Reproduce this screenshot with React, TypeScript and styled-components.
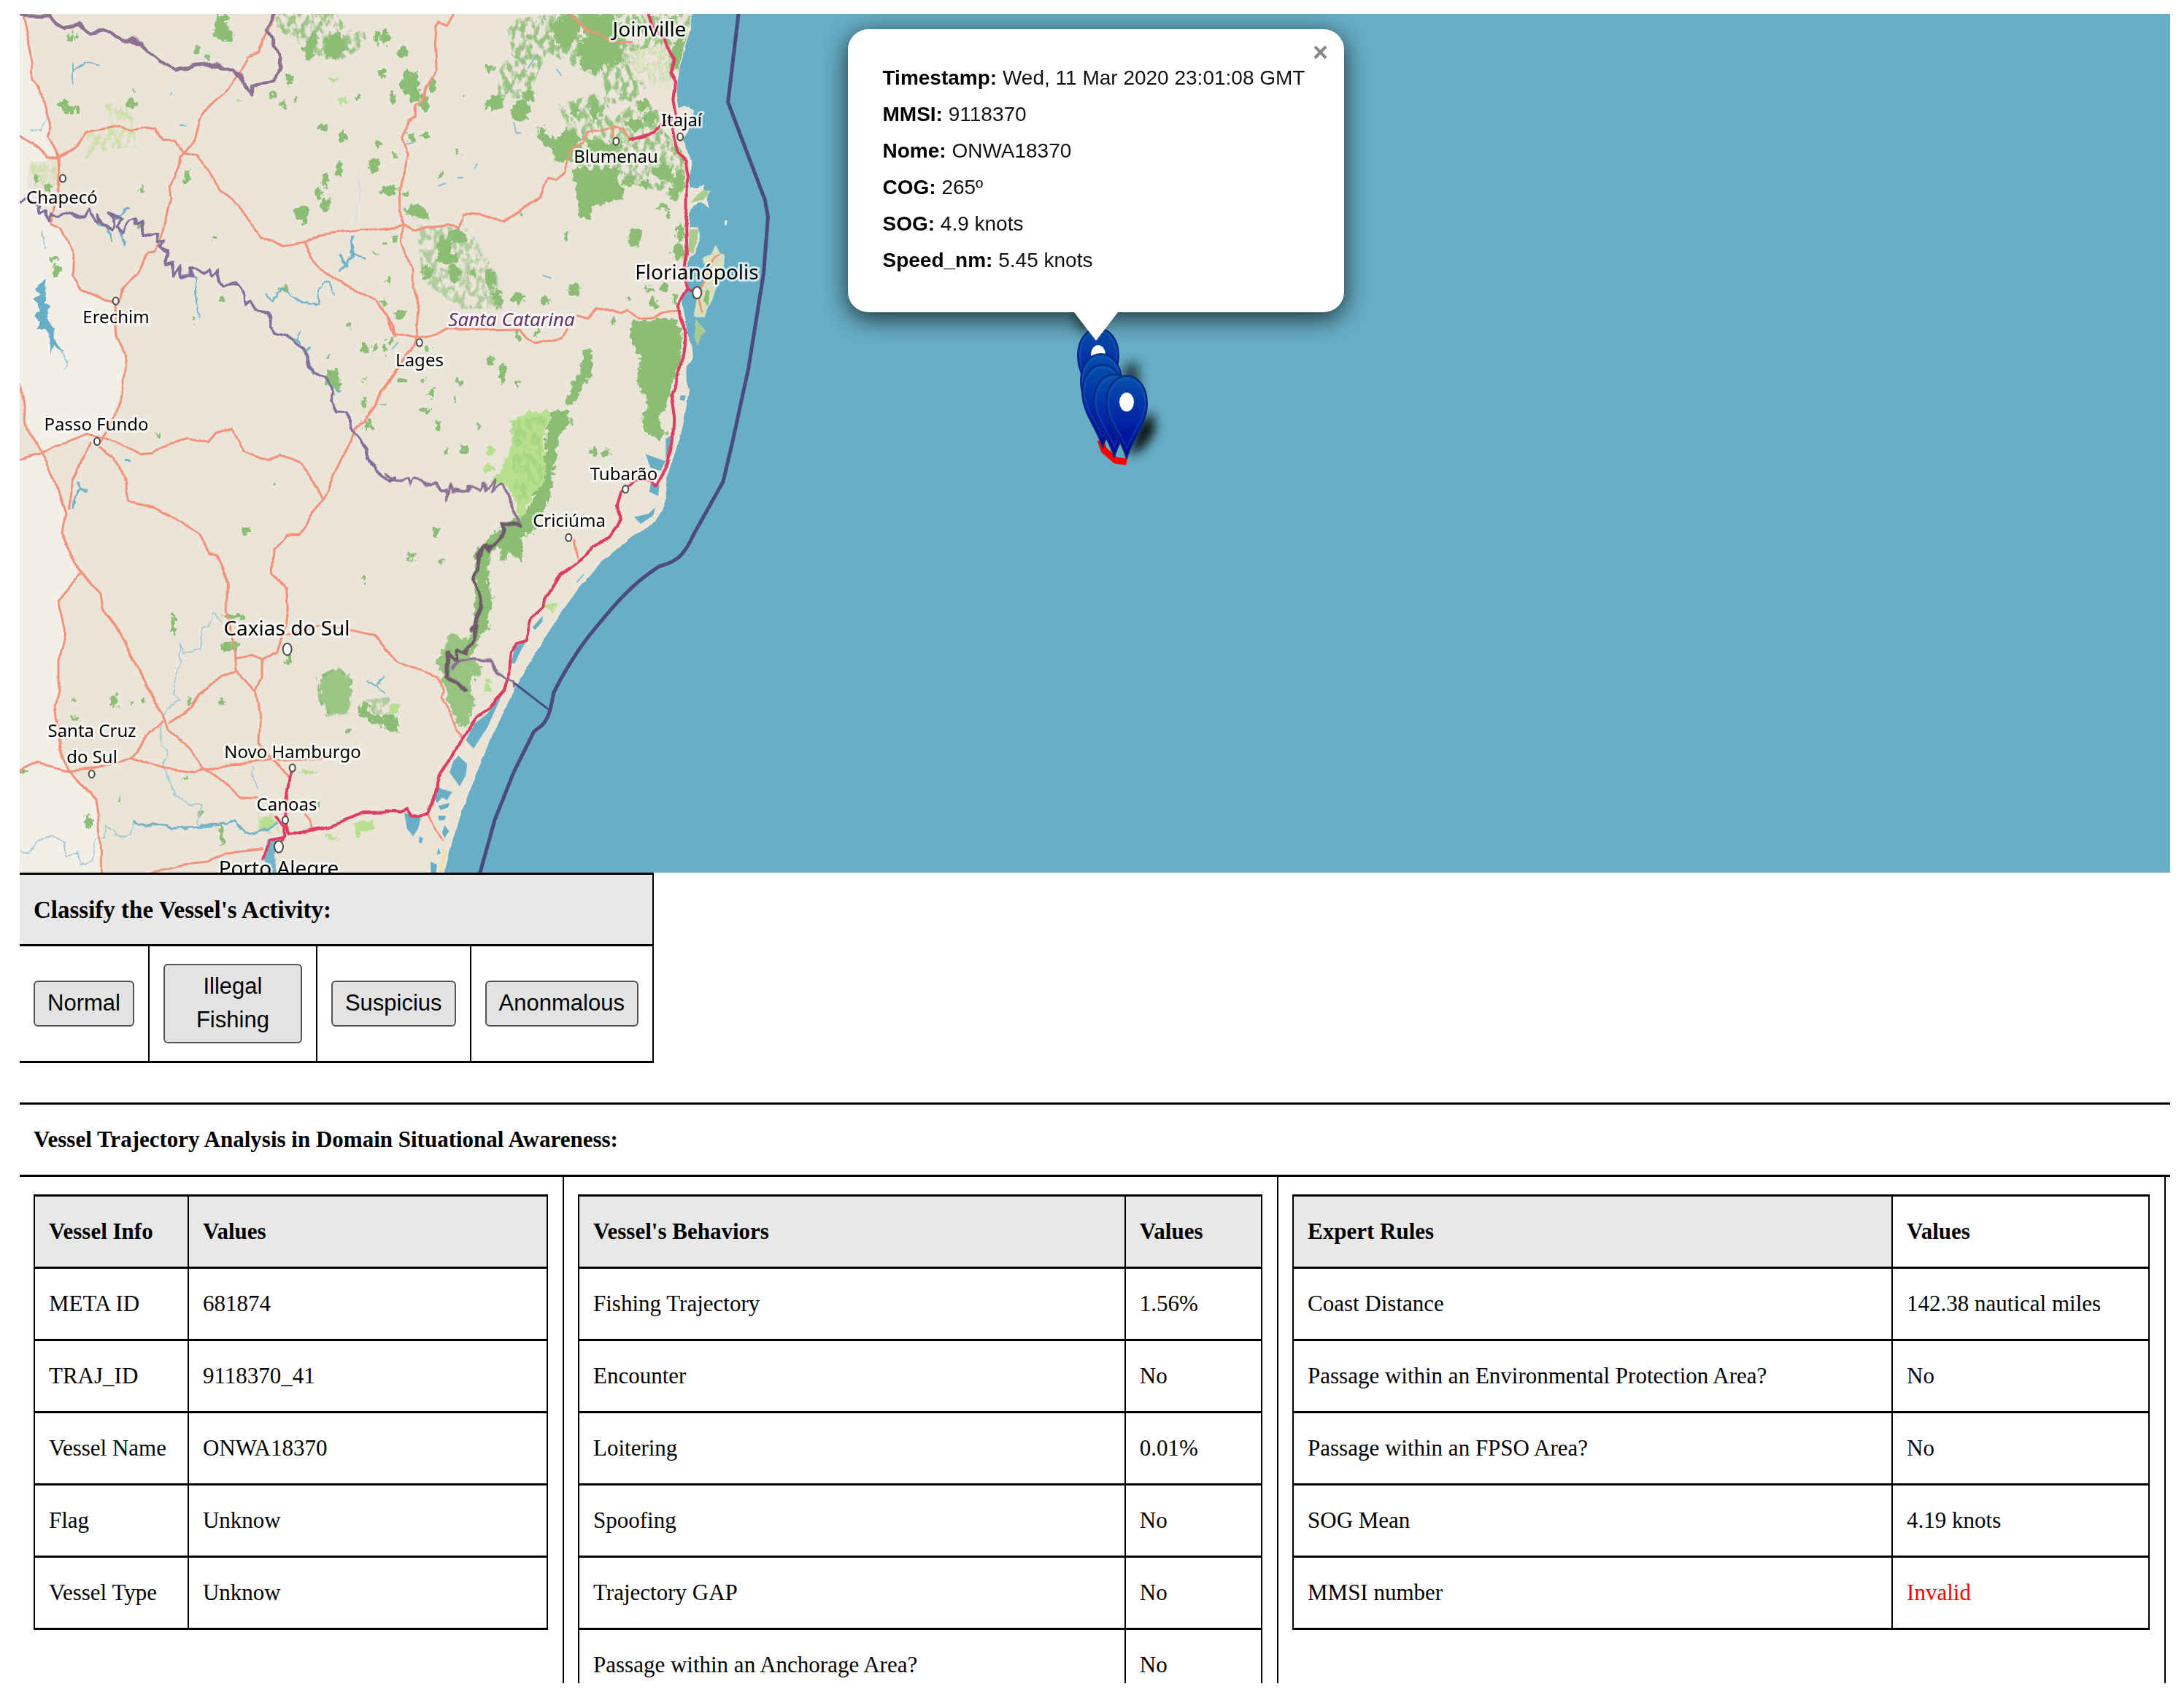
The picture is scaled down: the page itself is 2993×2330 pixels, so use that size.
import React from "react";
import styled, { createGlobalStyle } from "styled-components";

const GlobalStyle = createGlobalStyle`
  *, *::before, *::after { box-sizing: border-box; }
  body {
    margin: 0;
    background: #fff;
    color: #000;
    font-family: "Liberation Serif", "Times New Roman", serif;
  }
`;

const Page = styled.main`
  height: 100vh;
  padding: 19px 19px 23px 27px;
`;

const Viewport = styled.div`
  height: 100%;
  overflow: hidden;
`;

/* ---------- map ---------- */

const MapFrame = styled.section`
  position: relative;
  overflow: hidden;
  background: #67aec6;
`;

const MapCanvas = styled.svg`
  display: block;
  width: 100%;
  height: auto;
`;

const Popup = styled.article`
  position: absolute;
  left: 50%;
  top: 21px;
  width: 680px;
  height: 388px;
  margin-left: -339px;
  padding: 42px 24px 0 48px;
  border-radius: 28px;
  background: #fff;
  box-shadow: 0 8px 34px rgba(0, 0, 0, 0.75);
  font-family: "Liberation Sans", Arial, sans-serif;
  font-size: 28px;
  line-height: 50px;

  &::after {
    content: "";
    position: absolute;
    left: 50%;
    top: 100%;
    margin-left: -30px;
    border: 30px solid transparent;
    border-top: 39px solid #fff;
    border-bottom: 0;
  }
`;

const PopupLine = styled.p`
  margin: 0;
  color: #111;
  white-space: nowrap;

  b {
    color: #000;
  }
`;

const CloseButton = styled.button`
  position: absolute;
  right: 12px;
  top: 12px;
  width: 40px;
  height: 40px;
  padding: 0;
  border: 0;
  background: none;
  color: #8a8a8a;
  font: bold 36px/40px "Liberation Sans", Arial, sans-serif;
`;

const MapLabel = styled.text<{ $size: number; $region?: boolean }>`
  font-family: "Noto Sans", "Open Sans", sans-serif;
  font-size: ${(p) => p.$size}px;
  font-style: ${(p) => (p.$region ? "italic" : "normal")};
  fill: ${(p) => (p.$region ? "#5f3366" : "#000")};
  text-anchor: middle;
  paint-order: stroke;
  stroke: rgba(255, 255, 255, 0.7);
  stroke-width: 6px;
  stroke-linejoin: round;
`;

const Line = styled.path<{ $color: string; $width: number }>`
  fill: none;
  stroke: ${(p) => p.$color};
  stroke-width: ${(p) => p.$width}px;
  stroke-linejoin: round;
  stroke-linecap: round;
  vector-effect: non-scaling-stroke;
`;

/* The land is digitised on a west and an east sheet, each with its own scale. */
const west = (x: number, y: number) => [x / 3 - 7, y / 2.613 - 9] as const;
const east = (x: number, y: number) => [x / 2.904 + 503, y / 2.613 - 9] as const;
const WEST = "translate(-7 -9) scale(0.3333 0.3827)";
const EAST = "translate(503 -9) scale(0.3444 0.3827)";

const LAND = "#eae4d9";
const PLAIN = "#f2efe9";
const WOOD = "#8bbd74";
const SCRUB = "#b6df8e";
const WATER = "#67aec6";
const ROAD = "#f4917a";
const MOTORWAY = "#e03a62";
const STATE = "#8c7192";
const SEA = "#4a4a80";

type Place = { name: string; x: number; y: number; size?: number; region?: boolean };
const places: Place[] = [
  { name: "Joinville", x: 863, y: 31, size: 28 },
  { name: "Itajaí", x: 907, y: 154 },
  { name: "Blumenau", x: 817, y: 204 },
  { name: "Florianópolis", x: 928, y: 364, size: 28 },
  { name: "Santa Catarina", x: 674, y: 428, size: 26, region: true },
  { name: "Lages", x: 548, y: 483 },
  { name: "Chapecó", x: 58, y: 260 },
  { name: "Erechim", x: 132, y: 424 },
  { name: "Passo Fundo", x: 105, y: 571 },
  { name: "Tubarão", x: 828, y: 639 },
  { name: "Criciúma", x: 753, y: 703 },
  { name: "Caxias do Sul", x: 366, y: 852, size: 28 },
  { name: "Santa Cruz", x: 99, y: 991 },
  { name: "do Sul", x: 99, y: 1027 },
  { name: "Novo Hamburgo", x: 374, y: 1020 },
  { name: "Canoas", x: 366, y: 1092 },
  { name: "Porto Alegre", x: 355, y: 1181, size: 28 },
];

const towns = [
  west(198, 613), west(416, 1052), west(339, 1555), west(317, 2746),
  west(1142, 2724), west(1113, 2911), east(130, 1201), east(913, 480),
  east(1168, 464), east(950, 1726), east(724, 1899),
];
const cities = [east(1235, 1022), west(1121, 2299), west(1086, 3006)];

/* Small woods: x, y, rx, ry */
const westWoods = [
  [850, 40, 26, 16], [850, 80, 30, 40], [880, 100, 20, 20], [752, 155, 14, 16], [795, 178, 10, 9],
  [222, 110, 18, 10], [252, 98, 8, 10], [200, 345, 22, 14], [225, 365, 24, 14], [260, 368, 12, 14],
  [480, 345, 22, 18], [490, 298, 5, 8], [1208, 160, 24, 26], [1225, 120, 18, 30], [1128, 258, 16, 18],
  [1060, 318, 10, 12], [1105, 345, 10, 16], [1155, 332, 8, 10], [1412, 320, 10, 10], [1552, 325, 9, 20],
  [1510, 236, 12, 14], [1490, 105, 16, 24], [1527, 110, 20, 22], [1268, 428, 20, 12], [1350, 462, 16, 16],
  [1498, 488, 16, 14], [1478, 568, 22, 26], [1335, 578, 14, 28], [1278, 620, 14, 28], [1250, 665, 16, 22],
  [1275, 705, 18, 26], [1180, 735, 36, 24], [1190, 762, 16, 14], [1535, 658, 28, 18], [707, 610, 12, 26],
  [92, 614, 14, 18], [140, 645, 16, 12], [160, 905, 14, 8], [175, 940, 18, 22], [527, 655, 9, 8],
  [517, 775, 10, 12], [820, 826, 8, 8], [1520, 850, 7, 8], [1482, 882, 8, 6], [1540, 978, 8, 14],
  [850, 1040, 10, 10], [738, 1115, 8, 14], [1110, 1005, 20, 8], [1518, 1058, 14, 8], [1378, 1136, 12, 12],
  [1440, 1222, 12, 18], [1482, 1218, 12, 16], [1522, 1228, 8, 14], [1545, 1190, 9, 12], [1298, 1250, 8, 7],
  [1305, 1325, 30, 28], [1320, 1360, 22, 18], [1438, 1410, 14, 18], [1438, 1336, 7, 7], [1452, 1498, 20, 16],
  [1515, 1425, 12, 6], [592, 1532, 7, 7], [1068, 1704, 6, 10], [948, 1874, 16, 16], [652, 2208, 10, 40],
  [410, 2485, 14, 28], [245, 2480, 10, 7], [245, 2546, 10, 10], [480, 2492, 12, 9], [528, 2484, 6, 12],
  [716, 2482, 10, 10], [852, 2486, 14, 8], [870, 2292, 22, 14], [905, 2292, 14, 20], [900, 2184, 44, 10],
  [1436, 2052, 8, 12], [1368, 2588, 8, 12], [706, 2762, 8, 10], [434, 2836, 7, 6], [305, 2920, 14, 30],
  [762, 2890, 8, 14], [852, 2970, 10, 40], [1250, 2855, 7, 10], [1130, 2335, 16, 16], [40, 2738, 12, 7],
];
const eastWoods = [
  [62, 160, 18, 18], [92, 270, 38, 44], [150, 345, 16, 34], [112, 320, 24, 20], [24, 328, 10, 14],
  [182, 282, 12, 22], [308, 320, 7, 7], [410, 220, 14, 18], [530, 370, 36, 40], [565, 318, 26, 20],
  [430, 345, 38, 28], [98, 465, 12, 14], [154, 460, 18, 14], [34, 528, 9, 12], [278, 520, 8, 6],
  [222, 592, 16, 10], [20, 655, 22, 20], [74, 668, 14, 12], [118, 730, 44, 24], [150, 748, 16, 14],
  [280, 820, 34, 26], [228, 850, 26, 34], [240, 900, 44, 20], [160, 950, 24, 24], [270, 955, 24, 30],
  [32, 824, 12, 12], [412, 972, 24, 30], [345, 950, 8, 10], [440, 1040, 20, 36], [520, 1040, 28, 18],
  [628, 1052, 16, 16], [746, 1010, 28, 24], [716, 816, 8, 14], [988, 825, 26, 40], [966, 1044, 6, 14],
  [745, 368, 16, 24], [826, 362, 18, 42], [1025, 350, 22, 18], [1045, 395, 26, 22], [985, 420, 40, 22],
  [1100, 590, 44, 28], [1028, 630, 16, 14], [960, 620, 26, 20], [1165, 620, 20, 40], [1146, 670, 18, 28],
  [1100, 715, 26, 12], [1122, 738, 8, 14], [1168, 810, 14, 28], [1162, 876, 22, 30], [1046, 1008, 20, 8],
  [1104, 1000, 12, 24], [1062, 1066, 16, 20], [1146, 1050, 10, 16], [904, 1126, 8, 14], [522, 1180, 10, 22],
  [596, 1166, 10, 10], [162, 1222, 12, 14], [412, 1265, 14, 20], [462, 1308, 14, 38], [522, 1350, 8, 20],
  [292, 1345, 12, 12], [182, 1382, 16, 16], [60, 1338, 20, 14], [146, 1332, 7, 12], [274, 1400, 7, 10],
  [150, 1442, 22, 8], [205, 1500, 14, 18], [362, 1496, 6, 8], [50, 1100, 22, 22], [540, 742, 7, 10],
  [310, 1587, 14, 14], [238, 1592, 8, 12], [818, 1590, 18, 12], [870, 1600, 18, 18], [194, 1880, 12, 18],
  [96, 1966, 18, 14], [222, 1984, 8, 12], [14, 2560, 24, 30],
];

const Woods = ({ items }: { items: number[][] }) => (
  <g fill={WOOD} filter="url(#ragged)">
    {items.map(([x, y, rx, ry], i) => (
      <ellipse key={i} cx={x} cy={y} rx={rx} ry={ry} />
    ))}
  </g>
);

const Pin = ({ x, y, dot }: { x: number; y: number; dot?: boolean }) => (
  <g transform={`translate(${x} ${y})`}>
    <path
      d="M0 0C-5-24-28-46-28-77C-28-98-16-114 0-114S28-98 28-77C28-46 5-24 0 0Z"
      fill="url(#pin)"
      stroke="#062a7c"
      strokeWidth="2"
    />
    <path
      d="M0-14C-6-34-25-52-25-77C-25-96-14-110 0-110S25-96 25-77C25-52 6-34 0-14Z"
      fill="none"
      stroke="#2f6fd0"
      strokeOpacity="0.3"
      strokeWidth="2"
    />
    {dot && <ellipse cx="0" cy="-78" rx="10" ry="13" fill="#fff" />}
  </g>
);

const CoastMap = () => (
  <MapCanvas viewBox="0 0 2947 1177" role="img" aria-label="Map of the coast of Santa Catarina">
    <defs>
      <linearGradient id="pin" x1="0" y1="0" x2="0" y2="1">
        <stop offset="0" stopColor="#0450ac" />
        <stop offset="0.55" stopColor="#0324a4" />
        <stop offset="1" stopColor="#020090" />
      </linearGradient>
      <filter id="ragged" x="-5%" y="-5%" width="110%" height="110%">
        <feTurbulence type="fractalNoise" baseFrequency="0.045" numOctaves="3" seed="4" />
        <feDisplacementMap in="SourceGraphic" scale="40" xChannelSelector="R" yChannelSelector="G" />
      </filter>
      <filter id="meander" x="-5%" y="-5%" width="110%" height="110%">
        <feTurbulence type="fractalNoise" baseFrequency="0.03" numOctaves="2" seed="9" />
        <feDisplacementMap in="SourceGraphic" scale="22" xChannelSelector="R" yChannelSelector="G" />
      </filter>
      <filter id="wobble" x="-5%" y="-5%" width="110%" height="110%">
        <feTurbulence type="fractalNoise" baseFrequency="0.02" numOctaves="2" seed="2" />
        <feDisplacementMap in="SourceGraphic" scale="12" xChannelSelector="R" yChannelSelector="G" />
      </filter>
      <filter id="speckle" x="0" y="0" width="100%" height="100%">
        <feTurbulence type="fractalNoise" baseFrequency="0.045 0.03" numOctaves="3" seed="7" />
        <feColorMatrix values="0 0 0 0 0  0 0 0 0 0  0 0 0 0 0  6 0 0 0 -2.6" result="m" />
        <feComposite in="SourceGraphic" in2="m" operator="in" />
      </filter>
      <filter id="soft" x="-50%" y="-50%" width="200%" height="200%">
        <feGaussianBlur stdDeviation="8" />
      </filter>
      <clipPath id="mapArea">
        <rect width="2947" height="1177" />
      </clipPath>
    </defs>

    <rect width="1100" height="1177" fill={LAND} />

    {/* plains in the west */}
    <g transform={WEST}>
      <path
        fill={PLAIN}
        d="M0 0H35L60 120L80 200V265L105 290L130 370L150 430L135 470L180 540L60 560L50 640L100 720L150 775L190 790L240 880L235 960L270 1010L370 1055L410 1060L420 1180L455 1250L440 1370L400 1470L360 1530L210 1560L115 1592L165 1692L210 1807L195 1882L250 1982L285 2017L180 2127L210 2242L180 2342V2442L165 2502L185 2652L230 2732L335 2832L355 2942V3140H0Z"
      />
      <path fill={LAND} d="M0 1340L21 1350L45 1480L115 1592L21 1612H0Z" />
    </g>

    {/* speckled uplands */}
    <g transform={WEST}>
      <g fill={WOOD} filter="url(#speckle)">
        <path d="M1070 20H1320L1370 80L1440 90L1450 130L1400 160L1340 190L1260 185L1200 190L1190 140L1080 80Z" opacity="0.8" />
        <path d="M1240 2400L1330 2360L1390 2410L1380 2530L1280 2540L1250 2480Z" />
        <path d="M1440 2480L1540 2470L1570 2560L1480 2540Z" opacity="0.6" />
      </g>
      <g fill={WOOD} filter="url(#ragged)">
        <path d="M1270 120L1340 90L1370 140L1330 185L1275 180Z" />
        <path fill="#9cc685" d="M1255 2410L1330 2370L1385 2410L1380 2480L1370 2530L1300 2530L1260 2480Z" />
        <path d="M1410 2510L1450 2485L1460 2530L1575 2550V2600L1490 2570L1420 2540Z" />
      </g>
      <g fill="#cfe0ac" filter="url(#speckle)">
        <path d="M360 345L480 340L500 500L380 510L290 545L300 440L400 425Z" />
        <path d="M55 550L180 545L190 640L90 640Z" />
        <path d="M1000 2880L1080 2890L1090 2960L1000 2960Z" />
      </g>
      <g fill={SCRUB} filter="url(#ragged)">
        <ellipse cx="1310" cy="260" rx="14" ry="12" />
        <ellipse cx="1350" cy="336" rx="18" ry="12" />
        <ellipse cx="922" cy="336" rx="12" ry="10" />
        <ellipse cx="1210" cy="2740" rx="34" ry="8" />
        <path d="M1400 2920L1480 2912V2940L1430 2950L1400 2975Z" />
        <path d="M1275 2960L1340 2980L1300 2990Z" />
        <ellipse cx="1040" cy="2920" rx="30" ry="20" />
      </g>
    </g>
    <g transform={EAST}>
      <g fill={WOOD} filter="url(#speckle)">
        <path d="M520 40L700 20H1225L1190 150L1140 230L1130 260L1040 280L960 350L880 340L860 260L820 240L760 220L640 160L600 240L560 330L440 320L450 220L500 160L480 80Z" opacity="0.85" />
        <path d="M680 350L860 300L900 400L1000 330L1080 370L1090 430L1180 520L1190 640L1150 700L1100 660L1000 640L740 560L720 430Z" opacity="0.85" />
        <path d="M120 780L320 790L380 870L440 960L460 1080L300 1080L140 980Z" opacity="0.6" />
      </g>
      <g fill="#dfe6c2" filter="url(#speckle)">
        <path d="M960 160L1120 130L1130 300L980 260Z" />
      </g>
    </g>

    <g transform={WEST}><Woods items={westWoods} /></g>
    <g transform={EAST}>
      <Woods items={eastWoods} />
      <g fill={WOOD} filter="url(#ragged)">
        <path d="M650 60L730 20L780 60L740 120L720 160L670 110Z" />
        <path d="M760 20H900L940 150L930 200L860 210L830 240L770 215L760 130L800 110Z" />
        <path d="M1140 130L1200 110L1180 180L1160 230L1130 180Z" />
        <path d="M600 425H630V460L680 470L720 430L770 460L740 550L670 555L660 500L600 480Z" />
        <path d="M735 575H930L920 620L950 660L930 690L820 710L800 770L765 740L755 660Z" />
        <path d="M790 470L900 490L960 480L900 520L800 515Z" />
        <path d="M970 1130L1130 1110L1175 1150L1175 1270L1130 1360L1110 1440L1080 1460L1110 1530L1070 1550L1010 1500L1040 1420L990 1330L1010 1260L970 1190Z" />
        <path d="M790 1220L815 1230V1320L780 1350L750 1420L710 1430L740 1350L770 1310Z" />
        <path d="M650 1450L720 1440L735 1500L690 1520L675 1560V1600L655 1720L640 1790L590 1830L590 1880L540 1890V1990L490 1950L460 1990L450 1930L410 1950L400 2080L420 2100L400 2230L370 2250L350 2310L290 2350L260 2330L330 2260L350 2200V1950L430 1880L470 1850L560 1800L610 1700Z" />
        <path fill="#98c481" d="M260 2240L320 2260L340 2330L380 2370L330 2420L350 2480L320 2580L280 2570L240 2480L220 2400L200 2340Z" />
      </g>
      <g fill={SCRUB} filter="url(#ragged)">
        <path d="M490 1480L560 1450L650 1450L620 1560L630 1700L570 1760L530 1840L500 1740L450 1700L470 1620L500 1560Z" />
        <ellipse cx="410" cy="1590" rx="22" ry="16" />
        <ellipse cx="405" cy="1650" rx="20" ry="16" />
        <ellipse cx="440" cy="1690" rx="20" ry="16" />
        <ellipse cx="660" cy="2146" rx="26" ry="12" />
        <ellipse cx="400" cy="2430" rx="12" ry="24" />
        <ellipse cx="30" cy="2515" rx="20" ry="16" />
      </g>
      <path
        fill="#9fcf7d"
        opacity="0.6"
        filter="url(#speckle)"
        d="M500 1480L640 1460L610 1560L620 1690L560 1760L520 1800L500 1700Z"
      />
    </g>

    {/* ocean */}
    <g clipPath="url(#mapArea)">
      <g transform={EAST}>
        <g filter="url(#wobble)">
          <path
            fill={WATER}
            stroke="#f0ead8"
            strokeWidth="4"
            d="M1230 -60L1205 80L1185 150L1165 210L1155 270L1152 320L1158 360L1185 355L1220 370L1215 400L1200 440L1180 470L1190 510L1215 550L1205 600V650L1240 650L1258 640L1260 660L1280 660L1270 680L1280 712L1250 695L1215 710L1200 740L1205 790L1240 790L1245 830L1225 880L1205 890L1195 920V1000L1170 1050L1180 1100L1195 1170L1210 1210L1215 1260L1190 1290V1340L1200 1370L1190 1430L1180 1480L1165 1542L1135 1622L1115 1672L1108 1722L1110 1762L1095 1802L1070 1842L1000 1877L930 1927L850 1987L760 2082L680 2182L600 2297L530 2402L470 2512L410 2622L350 2752L300 2872L260 2982L210 3160L205 3200H2000V-60Z"
          />
          <path fill="#d8dfbe" d="M1310 850L1325 880L1345 890L1340 940L1310 1010L1300 1040L1275 1080L1265 1110L1225 1110L1230 1060L1250 1010L1270 930L1255 900L1290 885Z" />
          <path fill="#a9cb90" d="M1230 1115L1250 1140L1275 1160L1250 1180L1235 1215L1222 1170Z" />
          <path fill="#a9cb90" d="M1205 700L1262 650L1280 665L1255 690Z" />
          <path fill="#a9cb90" d="M1205 795L1240 795L1240 830L1220 880L1200 870Z" />
          <path fill={WOOD} d="M1272 1010L1285 1020L1275 1070L1260 1050Z" />
          <path fill="#e8e8da" d="M1345 762L1355 765L1352 780L1344 776Z" />
        </g>
      </g>
      <rect x="1080" width="1867" height="1177" fill={WATER} />
    </g>

    {/* lakes and rivers */}
    <g transform={WEST} filter="url(#meander)">
      <g fill="none" stroke="#6fb3c9">
        <path fill={WATER} stroke="none" d="M130 975L85 1005L105 1030L80 1045L105 1080L80 1110L105 1130L90 1150L130 1150L145 1185L150 1250L160 1210L205 1235L160 1180L165 1150L130 1120L145 1065L125 1060L130 1010Z" />
        <path strokeWidth="6" stroke="#a5cad2" d="M190 1230L220 1270L205 1300" />
        <path strokeWidth="5" d="M240 200V275M240 230L290 195L350 210M675 420H708M650 310L640 315" />
        <path strokeWidth="7" d="M340 770L380 790L400 840M430 800L455 850M400 770L470 720" />
        <path strokeWidth="6" d="M720 950L745 970L750 1060L760 1110" />
        <path strokeWidth="6" d="M1030 1025L1060 1050L1100 1005L1140 1035L1190 1060L1250 1065L1245 1010L1290 980L1320 1030M1380 880L1440 900" />
        <path strokeWidth="11" d="M1335 950L1390 890L1385 820M1340 890L1370 930" />
        <path strokeWidth="6" d="M1130 1175L1170 1200L1200 1250L1230 1320M1160 1200L1175 1160M1190 1240L1220 1220M1290 1340L1340 1380" />
        <path strokeWidth="10" d="M240 1795L245 1760L270 1720L300 1730M270 1720L260 1700M450 1620H480" />
        <path strokeWidth="5" d="M1445 2415L1485 2430L1520 2400M1485 2430L1520 2460" />
      </g>
      <g fill="none" stroke="#a5cad2" strokeWidth="5">
        <path d="M850 2200L820 2170L800 2220L770 2230L765 2300L700 2310L680 2280L685 2350L660 2400L650 2460L680 2480L630 2510L600 2580L605 2640L630 2660L610 2710L640 2780L660 2820L720 2860L770 2855L755 2930" />
        <path d="M21 3025L60 3030L85 2990L150 2965L200 2990L215 3040L260 3030L275 3070L320 3060L330 2980L370 2970L375 2930L440 2975L480 2960L490 2920" />
        <path d="M125 870L115 800M65 440L110 440L130 400M970 2720L1000 2800" />
        <path stroke="#d3dedd" d="M1400 780L1420 650L1415 580" />
      </g>
      <g fill="none" stroke="#74b4c8">
        <path strokeWidth="9" d="M490 2920L540 2930L600 2925L650 2940L760 2935L820 2930L910 2915L950 2960L1000 2955L1080 2925" />
        <path strokeWidth="40" d="M1060 2985L1050 3040L1065 3120" />
      </g>
    </g>
    <g transform={EAST}>
      <g fill={WATER}>
        <path d="M1030 1600L1060 1610L1110 1625L1090 1660L1050 1650Z" />
        <path d="M1110 1545L1140 1530L1130 1570L1110 1620Z" />
        <path d="M1050 1705L1085 1710L1080 1750L1045 1735Z" />
        <path d="M985 1825L1040 1815L1070 1790L1060 1820L1010 1850Z" />
        <path d="M510 2290L555 2270L530 2310L510 2350L495 2350Z" />
        <path d="M580 2220L620 2180V2200L590 2230Z" />
        <path d="M460 2460L400 2580L345 2655L315 2625L350 2565L400 2530Z" />
        <path d="M285 2680L320 2710L315 2750L290 2790L250 2740L265 2700Z" />
        <path d="M70 2885L135 2905L125 2940L105 2970L80 2940Z" />
        <path d="M200 2790L220 2800L260 2810L240 2840L220 2830L200 2850L190 2830Z" />
        <path d="M230 2930L248 2950L230 2975L220 2955Z" />
        <path d="M175 3060L200 3070L195 3110H175ZM205 3010L215 3030L200 3035Z" />
        <path d="M205 2860L250 2850L245 2865L215 2875ZM205 2895L235 2895L232 2910L208 2912Z" />
        <path d="M130 2970L145 2975L138 2995L128 2990Z" />
        <path d="M1170 1390H1190L1185 1410L1165 1405Z" />
      </g>
      <g fill="none" stroke="#86bccb" strokeWidth="5">
        <path d="M505 410L515 450H535M675 220L695 245M560 220L590 180M350 578L360 560M205 640L235 630M280 610H305M620 960L655 970M755 2060L785 2030M20 1225L45 1200M80 490L105 485" />
      </g>
      <path fill="#f1dfae" d="M225 3010L205 3110H222L238 3020Z" />
    </g>

    {/* roads */}
    <g filter="url(#wobble)">
      <g transform={WEST}>
        <Line $color={ROAD} $width={3} d="M35 24L60 120L80 200V265L105 290L130 370L150 430L135 470L180 540L185 640L150 775L190 790L240 880L235 960L270 1010L370 1055L410 1060L420 1180L455 1250L440 1370L400 1470L350 1560" />
        <Line $color={ROAD} $width={3} d="M21 460L80 490L130 540H180L260 500L300 452L430 430L480 445L545 425L580 430L620 475L660 475L690 515L745 525L800 590L840 660L920 710L960 770L1025 830L1050 830L1110 858L1190 845L1250 815L1380 800L1430 785L1500 795L1575 792" />
        <Line $color={ROAD} $width={3} d="M1070 24L1035 90L1000 165L955 180L920 235L860 300L820 330L760 400L740 465L690 515L675 530L660 600L640 640L645 685L625 720L600 830L575 885L545 885L500 960L440 1010L430 1055" />
        <Line $color={ROAD} $width={3} d="M1190 845L1250 930L1320 970L1410 1020L1490 1050L1555 1140L1560 1180" />
        <Line $color={ROAD} $width={3} d="M1560 1315L1510 1370L1490 1420L1440 1485L1390 1505L1355 1610L1275 1760L1200 1850L1160 1890L1110 1890L1065 1940L1060 2025L1115 2090L1120 2160L1105 2240" />
        <Line $color={ROAD} $width={3} d="M21 1350L45 1480L115 1592L165 1692L210 1807L195 1882L250 1982L285 2017L350 2100L360 2150L430 2230L490 2340L540 2440L610 2530L630 2590L720 2660L770 2725L810 2735L920 2828L1000 2830" />
        <Line $color={ROAD} $width={3} d="M21 1615L110 1595L160 1570L210 1560L290 1530L370 1540L440 1560L510 1595L570 1592L630 1565L720 1545L800 1562L830 1530L895 1510L940 1585L1035 1620L1090 1605L1170 1640L1275 1760" />
        <Line $color={ROAD} $width={3} d="M310 1560L270 1640L240 1690L220 1790M350 1575L410 1610L455 1700L470 1775L580 1795L690 1850L760 1890L800 1955L830 1960L880 2060V2110L870 2160L900 2290L905 2370L995 2455L1010 2540L1005 2640L1060 2700L1130 2755" />
        <Line $color={ROAD} $width={3} d="M285 2017L180 2127L210 2242L180 2342V2442L165 2502L185 2652L230 2732L335 2832L355 2942V3140" />
        <Line $color={ROAD} $width={3} d="M900 2335L980 2325L1020 2340L1080 2310L1100 2250L1250 2210L1400 2230L1480 2245L1560 2320M1020 2340V2400L995 2455M905 2380L850 2400L760 2465L730 2510L640 2562" />
        <Line $color={ROAD} $width={3} d="M21 2740L100 2705L230 2732L380 2720L470 2685L610 2560M470 2685L610 2725L740 2740L770 2725L940 2715L1060 2700L1290 2685M560 3098L700 3070L800 3062L870 3030L1010 3015M1190 2890L1215 2910L1225 2945" />
        <Line $color={MOTORWAY} $width={4} d="M1140 2730L1125 2830L1115 2910L1120 2960L1200 2945L1290 2930L1430 2885L1575 2882M1075 2900L1105 2930V2970L1040 2980L1015 3050M1105 2965L1085 3000" />
      </g>
      <g transform={EAST}>
        <Line $color={ROAD} $width={3} d="M265 24L240 60L205 45L195 60L190 130L195 225L150 290L140 345L120 355V395L90 410L60 470L85 530L65 600L45 660V730L70 790L65 850L105 940V1000L130 1080L125 1170L100 1230L50 1290L0 1345" />
        <Line $color={ROAD} $width={3} d="M0 797L70 785L115 805L150 785L240 775L285 790L310 742L370 745L470 775L550 715L605 680L635 608L670 615L710 590L730 510L780 490L800 445L860 450L910 430L950 435L980 470M912 430V470" />
        <Line $color={ROAD} $width={3} d="M0 1110L25 1170L110 1185L180 1175L250 1155L530 1150L560 1185L595 1205L690 1185L710 1150M755 1102L800 1112L840 1075L920 1100L950 1090L1000 1120L1060 1110L1100 1088L1155 1085" />
        <Line $color={ROAD} $width={3} d="M735 24L800 85L890 122H975M0 2295L50 2340L130 2370L190 2395L225 2450L215 2470L250 2530L270 2590L300 2620M740 1905L755 1970M165 2895L190 2950L230 2985M1250 1010L1300 900L1320 890M1240 1030L1252 1090" />
        <Line $color={MOTORWAY} $width={4} d="M1045 24L1060 70L1110 110L1135 180L1130 235L1150 270L1142 330L1155 400L1130 440L1155 520L1195 550L1205 600L1195 650V720L1185 780L1190 880L1180 960L1195 1015L1158 1070L1165 1110L1185 1160V1210L1170 1290L1130 1390L1145 1470L1140 1560L1120 1630L1070 1710L1050 1690H990L935 1735L920 1780L928 1830L880 1890L810 1930L790 1960L690 2030L630 2120L625 2150L575 2190L555 2260L515 2270L490 2300L485 2400L470 2450L410 2510L360 2540L300 2620L260 2690L210 2750L180 2850L165 2890L130 2897L95 2890L80 2868L50 2885L-10 2880" />
        <Line $color={MOTORWAY} $width={4} d="M980 470L1060 445L1090 410L1130 400M1195 1015L1230 1025" />
      </g>
    </g>

    {/* state and maritime borders */}
    <g filter="url(#meander)">
      <g transform={WEST}>
        <Line $color={STATE} $width={5} d="M21 28L150 30L200 75L260 65L310 95L370 88L440 112L480 105L525 125L540 160L590 195L680 222L740 205L800 200L850 215L910 215L940 240L970 315L980 275L1060 265L1090 225L1095 190L1070 140V110L1045 75L1070 24" />
        <Line $color="#80709a" $width={4} d="M21 690L45 680L60 710L105 715L110 750L130 730L150 765L160 735L200 750L240 735L280 755L300 720L310 745L335 770L350 750L345 780L390 795L400 750L440 760L410 780L455 810L470 770L490 765L500 790L520 780L530 820L580 810L590 850L625 850L600 870L630 880L615 920L645 910L660 960L680 925L695 960L725 965L730 930L770 945L790 925L810 960L830 935L840 980L870 1005L910 990L950 1030L960 1065L990 1045L1000 1085L1030 1090L1050 1140L1080 1165L1130 1175L1190 1230L1230 1310L1280 1330L1310 1380L1300 1415L1320 1460L1365 1460L1385 1520L1440 1580L1480 1665L1530 1690L1560 1675" />
      </g>
      <g transform={EAST}>
        <Line $color={STATE} $width={4} d="M0 1675L60 1695L90 1690L105 1720L120 1695L170 1720L185 1695L210 1730L235 1720L240 1750L255 1700L265 1730L315 1735L330 1710L370 1725L380 1700L400 1735L420 1705L430 1745L460 1720L490 1750L495 1780L525 1855" />
        <Line $color="#6d5c66" $width={5} d="M525 1855L460 1850L440 1910L410 1940L390 1925L365 1960L355 2040L370 2110L375 2150L355 2210L340 2220L360 2215L350 2255L320 2310L285 2305L280 2350L245 2320L240 2390L280 2410L310 2440" />
        <Line $color={STATE} $width={4} d="M260 2365L350 2325L410 2340L440 2390L490 2405L500 2425" />
      </g>
    </g>
    <g transform={EAST}>
      <Line $color={SEA} $width={3} d="M510 2422L640 2512" />
      <Line $color={SEA} $width={5} d="M1400 20L1358 340L1505 690L1517 750L1500 950L1440 1290L1375 1560L1338 1700L1220 1890C1180 1970 1150 1985 1085 2002C1000 2050 930 2110 815 2240C760 2300 700 2390 664 2455C655 2500 650 2530 630 2558C615 2580 600 2580 585 2595L505 2740L430 2910L365 3120" />
    </g>

    {towns.map(([x, y], i) => (
      <ellipse key={i} cx={x} cy={y} rx="4" ry="5" fill="#fff" stroke="#4a4a44" strokeWidth="2" />
    ))}
    {cities.map(([x, y], i) => (
      <ellipse key={i} cx={x} cy={y} rx="6" ry="8" fill="#fff" stroke="#4a4a44" strokeWidth="2" />
    ))}

    {places.map((p) => (
      <MapLabel key={p.name} x={p.x} y={p.y} $size={p.size ?? 24} $region={p.region}>
        {p.name}
      </MapLabel>
    ))}

    {/* track and position markers */}
    <g filter="url(#soft)">
      <path d="M1500 560L1516 480L1532 478L1534 520L1520 560Z" opacity="0.7" />
      <path d="M1518 606L1536 560L1552 545L1556 570L1540 595Z" />
      <path d="M1445 400H1480V435H1450Z" opacity="0.5" />
    </g>
    <path d="M1481 584L1486 598L1502 612L1517 614" fill="none" stroke="#f00" strokeWidth="9" strokeLinejoin="round" />
    <Pin x={1478} y={545} dot />
    <Pin x={1482} y={580} />
    <Pin x={1484} y={595} />
    <Pin x={1500} y={608} />
    <Pin x={1517} y={610} dot />
  </MapCanvas>
);

const popupFields = [
  ["Timestamp:", "Wed, 11 Mar 2020 23:01:08 GMT"],
  ["MMSI:", "9118370"],
  ["Nome:", "ONWA18370"],
  ["COG:", "265º"],
  ["SOG:", "4.9 knots"],
  ["Speed_nm:", "5.45 knots"],
];

/* ---------- classification ---------- */

const Classify = styled.section`
  width: max-content;
  margin-bottom: 54px;
  border: solid #000;
  border-width: 3px 2px 3px 0;
`;

const ClassifyTitle = styled.h2`
  display: flex;
  align-items: center;
  height: 98px;
  margin: 0;
  padding: 0 19px;
  border-bottom: 3px solid #000;
  background: #e8e8e8;
  font-size: 33px;
  line-height: 40px;
`;

const ClassifyRow = styled.div`
  display: flex;
`;

const ClassifyCell = styled.div`
  display: flex;
  align-items: center;
  height: 157px;
  padding: 0 19px;

  & + & {
    border-left: 2px solid #000;
  }
`;

const ClassifyButton = styled.button<{ $narrow?: boolean }>`
  width: ${(p) => (p.$narrow ? "190px" : "auto")};
  padding: 6px 17px 7px;
  border: 2px solid #555;
  border-radius: 6px;
  background: #e3e3e3;
  color: #000;
  font: 31px/46px "Liberation Sans", Arial, sans-serif;
`;

/* ---------- analysis ---------- */

const Analysis = styled.section`
  border-top: 3px solid #000;
`;

const AnalysisTitle = styled.h3`
  display: flex;
  align-items: center;
  height: 99px;
  margin: 0;
  padding: 0 19px;
  border-bottom: 3px solid #000;
  font-size: 31px;
  line-height: 40px;
`;

const AnalysisGrid = styled.div`
  display: grid;
  grid-template-columns: 746fr 979fr 1216fr 6fr;
`;

const AnalysisColumn = styled.div`
  min-width: 0;
  padding: 24px 20px 0 19px;
  border-right: 2px solid #000;
`;

const DataTable = styled.table<{ $labelWidth: string }>`
  width: 100%;
  border-collapse: collapse;
  table-layout: fixed;
  font-size: 31px;
  line-height: 40px;

  th,
  td {
    height: 99px;
    padding: 0 19px;
    border: solid #000;
    border-width: 3px 2px;
    text-align: left;
    white-space: nowrap;
  }

  th:first-child {
    width: ${(p) => p.$labelWidth};
  }
`;

const HeadCell = styled.th<{ $plain?: boolean }>`
  background: ${(p) => (p.$plain ? "#fff" : "#e8e8e8")};
`;

const ValueCell = styled.td<{ $alert?: boolean }>`
  color: ${(p) => (p.$alert ? "#f00" : "#000")};
`;

type Sheet = { title: string; labelWidth: string; plainValues?: boolean; rows: string[][] };
const sheets: Sheet[] = [
  {
    title: "Vessel Info",
    labelWidth: "30%",
    rows: [
      ["META ID", "681874"],
      ["TRAJ_ID", "9118370_41"],
      ["Vessel Name", "ONWA18370"],
      ["Flag", "Unknow"],
      ["Vessel Type", "Unknow"],
    ],
  },
  {
    title: "Vessel's Behaviors",
    labelWidth: "80%",
    rows: [
      ["Fishing Trajectory", "1.56%"],
      ["Encounter", "No"],
      ["Loitering", "0.01%"],
      ["Spoofing", "No"],
      ["Trajectory GAP", "No"],
      ["Passage within an Anchorage Area?", "No"],
    ],
  },
  {
    title: "Expert Rules",
    labelWidth: "70%",
    plainValues: true,
    rows: [
      ["Coast Distance", "142.38 nautical miles"],
      ["Passage within an Environmental Protection Area?", "No"],
      ["Passage within an FPSO Area?", "No"],
      ["SOG Mean", "4.19 knots"],
      ["MMSI number", "Invalid"],
    ],
  },
];

export default function App() {
  return (
    <Page>
      <GlobalStyle />
      <Viewport>
        <MapFrame>
          <CoastMap />
          <Popup>
            <CloseButton type="button" aria-label="Close popup">×</CloseButton>
            {popupFields.map(([label, value]) => (
              <PopupLine key={label}>
                <b>{label}</b> {value}
              </PopupLine>
            ))}
          </Popup>
        </MapFrame>

        <Classify>
          <ClassifyTitle>Classify the Vessel's Activity:</ClassifyTitle>
          <ClassifyRow>
            {["Normal", "Illegal Fishing", "Suspicius", "Anonmalous"].map((name) => (
              <ClassifyCell key={name}>
                <ClassifyButton type="button" $narrow={name.includes(" ")}>{name}</ClassifyButton>
              </ClassifyCell>
            ))}
          </ClassifyRow>
        </Classify>

        <Analysis>
          <AnalysisTitle>Vessel Trajectory Analysis in Domain Situational Awareness:</AnalysisTitle>
          <AnalysisGrid>
            {sheets.map((sheet) => (
              <AnalysisColumn key={sheet.title}>
                <DataTable $labelWidth={sheet.labelWidth}>
                  <thead>
                    <tr>
                      <HeadCell>{sheet.title}</HeadCell>
                      <HeadCell $plain={sheet.plainValues}>Values</HeadCell>
                    </tr>
                  </thead>
                  <tbody>
                    {sheet.rows.map(([label, value]) => (
                      <tr key={label}>
                        <td>{label}</td>
                        <ValueCell $alert={value === "Invalid"}>{value}</ValueCell>
                      </tr>
                    ))}
                  </tbody>
                </DataTable>
              </AnalysisColumn>
            ))}
          </AnalysisGrid>
        </Analysis>
      </Viewport>
    </Page>
  );
}
